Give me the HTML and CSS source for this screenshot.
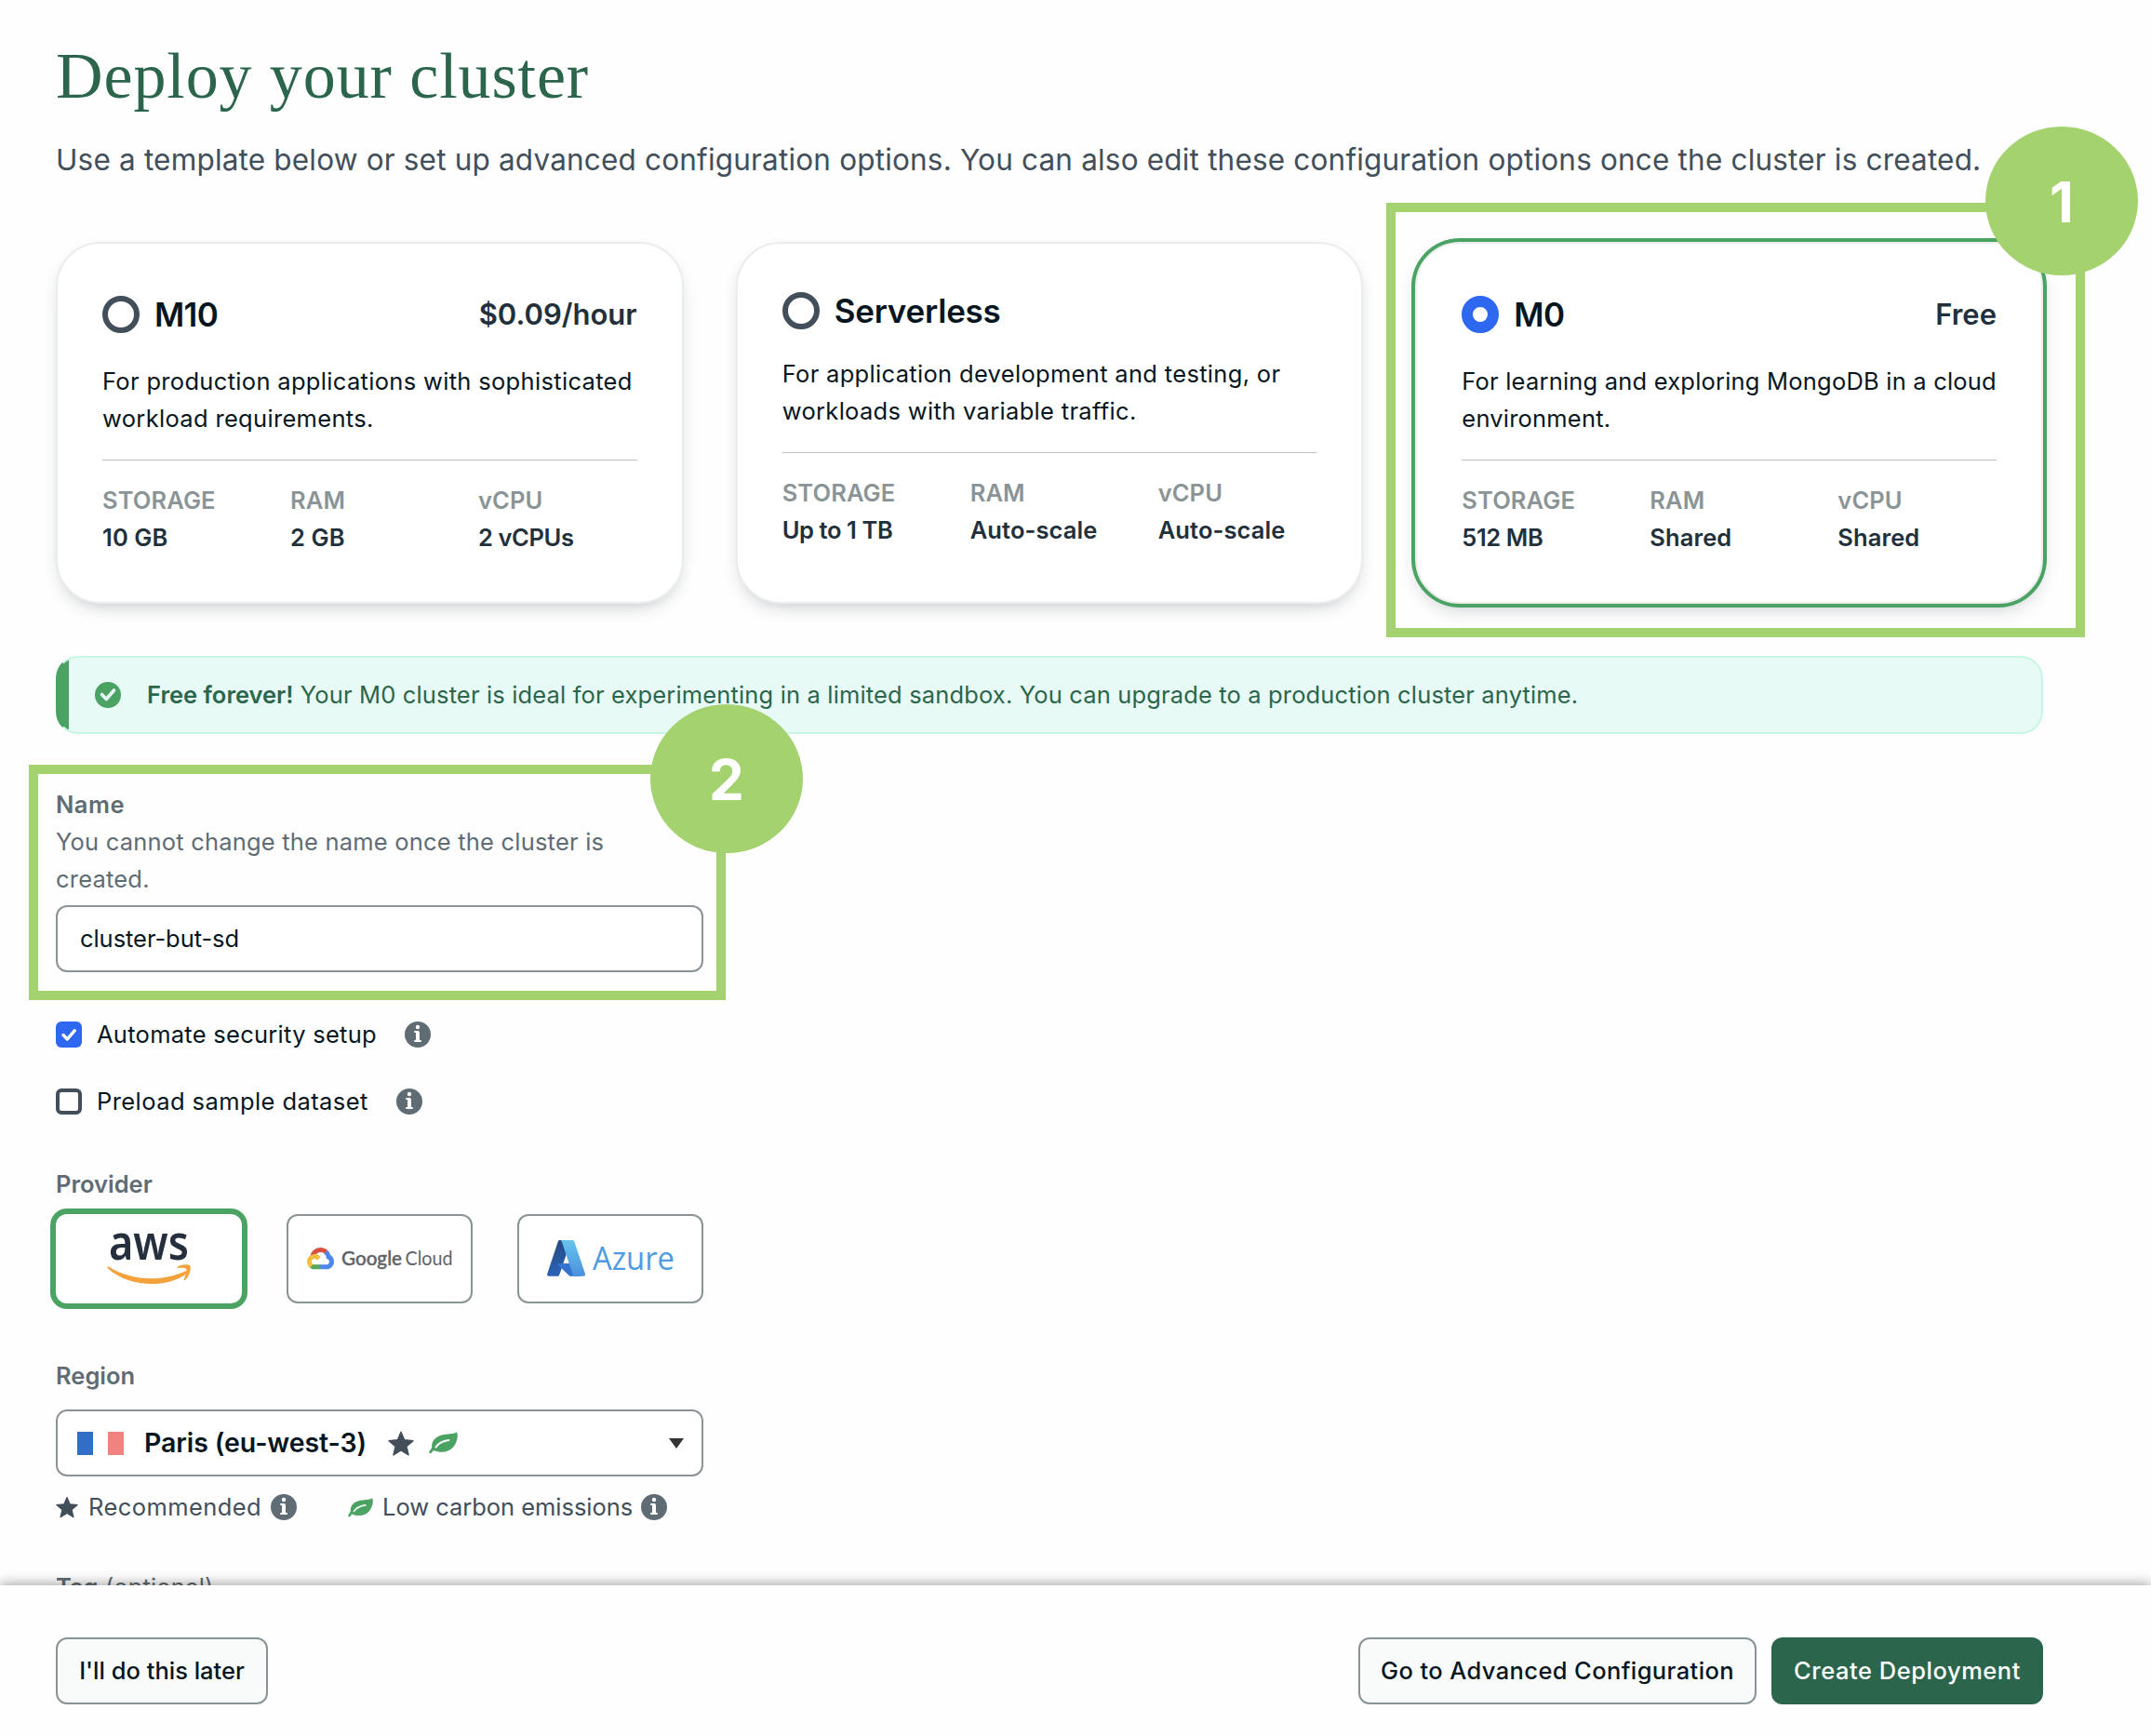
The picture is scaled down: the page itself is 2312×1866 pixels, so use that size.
FILE: index.html
```html
<!DOCTYPE html>
<html lang="en">
<head>
<meta charset="utf-8">
<title>Deploy your cluster</title>
<link rel="stylesheet" href="styles.css">
</head>
<body>
<svg width="0" height="0" class="defs">
  <symbol id="info" viewBox="1 1 14 14"><path fill-rule="evenodd" d="M8 15A7 7 0 1 0 8 1a7 7 0 0 0 0 14zM9.1 4a1.1 1.1 0 1 1-2.2 0 1.1 1.1 0 0 1 2.2 0zM8 6a1 1 0 0 1 1 1v4h.5a.5.5 0 0 1 0 1h-3a.5.5 0 0 1 0-1H7V7h-.5a.5.5 0 0 1 0-1H8z"/></symbol>
  <symbol id="star" viewBox="0 0 28 27"><path stroke-linejoin="round" stroke="currentColor" stroke-width="1.4" d="M14 1.2l3.6 8.6 9.4.8-7.1 6.1 2.2 9.2-8.1-4.9-8.1 4.9 2.2-9.2L1 10.6l9.4-.8z"/></symbol>
  <symbol id="leaf" viewBox="0 0 31 24"><path d="M29.600.5C26 3 20 1.800 14 3.500 7 5.500 2.500 10 3.200 17L.4 21.300C-.2 22.600 1.300 24 2.700 22.800L5 19.900c8 3.300 17 2 21.500-4C30.800 10.500 31.300 5 30.300.9c-.1-.5-.4-.6-.7-.4z"/><path fill="none" stroke="#fff" stroke-width="2" stroke-linecap="round" d="M7.500 16.500c3-5 7-6.500 14-7.500"/></symbol>
</svg>
<main class="page">
  <h1>Deploy your cluster</h1>
  <p class="lead">Use a template below or set up advanced configuration options. You can also edit these configuration options once the cluster is created.</p>

  <section class="plans">
    <article class="plan">
      <header class="plan-head"><i class="radio"></i><h2>M10</h2><b class="price">$0.09/hour</b></header>
      <p class="desc loose">For production applications with sophisticated<br>workload requirements.</p>
      <dl class="specs">
        <div><dt>STORAGE</dt><dd>10 GB</dd></div>
        <div><dt>RAM</dt><dd>2 GB</dd></div>
        <div><dt>vCPU</dt><dd class="tight">2 vCPUs</dd></div>
      </dl>
    </article>
    <article class="plan">
      <header class="plan-head compact"><i class="radio"></i><h2 class="long">Serverless</h2></header>
      <p class="desc loose">For application development and testing, or<br>workloads with variable traffic.</p>
      <dl class="specs">
        <div><dt>STORAGE</dt><dd class="tight">Up to 1 TB</dd></div>
        <div><dt>RAM</dt><dd>Auto-scale</dd></div>
        <div><dt>vCPU</dt><dd>Auto-scale</dd></div>
      </dl>
    </article>
    <article class="plan selected">
      <header class="plan-head"><i class="radio on"></i><h2>M0</h2><b class="price">Free</b></header>
      <p class="desc">For learning and exploring MongoDB in a cloud<br>environment.</p>
      <dl class="specs">
        <div><dt>STORAGE</dt><dd class="tight">512 MB</dd></div>
        <div><dt>RAM</dt><dd>Shared</dd></div>
        <div><dt>vCPU</dt><dd>Shared</dd></div>
      </dl>
    </article>
  </section>

  <section class="banner">
    <svg class="ok" viewBox="0 0 28 28"><circle cx="14" cy="14" r="14" fill="#4aa263"/><path d="M7.500 13.500l4.800 5L20.500 9" fill="none" stroke="#e7faf6" stroke-width="3.600" stroke-linecap="round" stroke-linejoin="round"/></svg>
    <p><b>Free forever!</b> Your M0 cluster is ideal for experimenting in a limited sandbox. You can upgrade to a production cluster anytime.</p>
  </section>

  <form class="settings">
    <label class="label name-label">Name</label>
    <p class="help">You cannot change the name once the cluster is<br>created.</p>
    <div class="field">cluster-but-sd</div>
    <div class="checks">
      <div class="check"><i class="box on"><svg viewBox="0 0 28 28"><path d="M8 14.500l4.300 4.500L20.300 9.700" fill="none" stroke="#fff" stroke-width="3.400" stroke-linecap="round" stroke-linejoin="round"/></svg></i><span class="check-text">Automate security setup</span><svg class="info"><use href="#info"/></svg></div>
      <div class="check"><i class="box"></i><span class="check-text looser">Preload sample dataset</span><svg class="info"><use href="#info"/></svg></div>
    </div>

    <label class="label provider-label">Provider</label>
    <div class="providers">
      <div class="provider active"><svg viewBox="0 0 200 96"><text class="aws-text" x="57" y="48.500" textLength="86" lengthAdjust="spacingAndGlyphs">aws</text><path fill="#f3a23c" d="M56.500 56.500C82 72 113 73 139 61.500c2-.8 3.600 1.200 1.700 2.700C118 80 79 79 56 58.500c-1.200-1.100-.5-2.600.5-2z"/><path fill="#f3a23c" d="M131 56.500c4-2.700 11.500-3 13.200-1.200 1.500 1.900-.2 11.500-5.200 15.700-.9.700-1.700.3-1.300-.7 1.300-3.200 3.400-9.300 2.500-11.300-.9-1.500-5.600-1.300-8.600-1-1 .1-1.500-.8-.6-1.500z"/></svg></div>
      <div class="provider"><svg viewBox="0 0 200 96"><g transform="translate(22 36) scale(.1133)"><path fill="#d9503f" d="M170.252 56.819l22.253-22.253 1.483-9.370C153.437-11.677 88.976-7.496 52.420 33.920 42.267 45.423 34.734 59.764 30.717 74.573l7.970-1.123 44.505-7.340 3.436-3.513c19.797-21.742 53.270-24.667 76.128-6.168l7.496.390z"/><path fill="#4f86ee" d="M224.205 73.918a100.249 100.249 0 0 0-30.217-48.722l-31.232 31.232a55.515 55.515 0 0 1 20.379 44.037v5.544c15.350 0 27.797 12.445 27.797 27.796 0 15.352-12.446 27.485-27.797 27.485h-55.671l-5.466 5.934v33.340l5.466 5.231h55.670c39.930.311 72.553-31.494 72.864-71.424a72.303 72.303 0 0 0-31.793-60.453"/><path fill="#58a55c" d="M71.870 205.796h55.593V161.290H71.870a27.275 27.275 0 0 1-11.400-2.498l-7.887 2.420-22.409 22.253-1.952 7.574c12.567 9.489 27.900 14.825 43.647 14.757"/><path fill="#f2be42" d="M71.870 61.425C31.940 61.663-.237 94.228.001 134.158a72.301 72.301 0 0 0 28.222 56.880l32.248-32.246c-13.990-6.322-20.208-22.786-13.887-36.776 6.320-13.990 22.786-20.208 36.775-13.888a27.796 27.796 0 0 1 13.887 13.888l32.248-32.248A72.224 72.224 0 0 0 71.870 61.425"/></g><text class="gcp-text medium" x="59" y="55" textLength="65" lengthAdjust="spacingAndGlyphs">Google</text><text class="gcp-text" x="127.500" y="55" textLength="51" lengthAdjust="spacingAndGlyphs">Cloud</text></svg></div>
      <div class="provider"><svg viewBox="0 0 200 96">
        <defs><linearGradient id="az1" x1="0" y1="0" x2="0" y2="1"><stop offset="0" stop-color="#264a80"/><stop offset="1" stop-color="#2b63b8"/></linearGradient><linearGradient id="az2" x1="0" y1="0" x2="0" y2="1"><stop offset="0" stop-color="#68c5ee"/><stop offset="1" stop-color="#4a90dc"/></linearGradient></defs>
        <g transform="translate(30.200 25) scale(.466)"><path fill="url(#az1)" d="M33.338 6.544h26.038l-27.030 80.087a4.152 4.152 0 0 1-3.933 2.824H8.149a4.145 4.145 0 0 1-3.928-5.470L29.404 9.368a4.152 4.152 0 0 1 3.934-2.825z"/><path fill="#3374cc" d="M71.175 60.261h-41.290a1.911 1.911 0 0 0-1.305 3.309l26.532 24.764a4.171 4.171 0 0 0 2.846 1.121h23.380z"/><path fill="url(#az2)" d="M66.595 9.364a4.145 4.145 0 0 0-3.928-2.820H33.648a4.146 4.146 0 0 1 3.928 2.820l25.184 74.620a4.146 4.146 0 0 1-3.928 5.472h29.020a4.146 4.146 0 0 0 3.927-5.472z"/></g><text class="azure-text" x="81" y="59.700" textLength="88" lengthAdjust="spacingAndGlyphs">Azure</text></svg></div>
    </div>

    <label class="label region-label">Region</label>
    <div class="field select">
      <i class="flag"></i><b class="region-name">Paris (eu-west-3)</b><svg class="star big"><use href="#star"/></svg><svg class="leaf big"><use href="#leaf"/></svg><i class="caret"></i>
    </div>
    <div class="legend">
      <svg class="star"><use href="#star"/></svg><span class="rec looser">Recommended</span><svg class="info"><use href="#info"/></svg>
      <svg class="leaf"><use href="#leaf"/></svg><span class="low">Low carbon emissions</span><svg class="info"><use href="#info"/></svg>
    </div>
    <p class="tag"><b>Tag</b> (optional)</p>
  </form>
</main>
<footer class="actions">
  <button class="btn later">I'll do this later</button>
  <button class="btn advanced">Go to Advanced Configuration</button>
  <button class="btn primary">Create Deployment</button>
</footer>

<div class="mark-frame frame-plan"></div>
<div class="mark-dot dot-plan">1</div>
<div class="mark-frame frame-name"></div>
<div class="mark-dot dot-name">2</div>
</body>
</html>
```
FILE: styles.css
```css
* { box-sizing: border-box; }
body {
  margin: 0; position: relative; width: 2312px; height: 1866px; overflow: hidden;
  background: #fefefe; color: #061621;
  font: 400 25.500px/40px Inter, "Noto Sans", sans-serif;
}
h1, h2, p, dl, dd { margin: 0; }
b { font-weight: 600; letter-spacing: 0; }
i { display: block; flex: none; }
svg { display: block; flex: none; overflow: visible; }
p, span, dd { white-space: nowrap; }
.defs { position: absolute; }
.page { height: 1704px; overflow: hidden; padding: 42px 116px 0 60px; }

h1 { font: 400 70px/80px "Liberation Serif", serif; letter-spacing: .9px; color: #2b664c; }
.lead { margin-top: 26px; font-size: 31.500px; line-height: 48px; letter-spacing: .18px; color: #424f5a; }

.plans { margin-top: 64px; display: grid; grid-template-columns: repeat(3, minmax(0, 1fr)); gap: 56px; }
.plan {
  height: 389px; padding: 52px 48px 0; border: 2px solid #e9edec; border-radius: 48px;
  background: #fff; box-shadow: 0 8px 20px -8px rgba(0, 30, 43, .3);
}
.plan.selected { box-shadow: 0 0 0 4px #4aa263, 0 8px 20px -4px rgba(0, 30, 43, .25); }
.plan-head { display: flex; align-items: center; height: 48px; }
.plan-head.compact { height: 40px; }
.radio { width: 40px; height: 40px; border: 6px solid #424f5a; border-radius: 50%; }
.radio.on { border: 12px solid #2f68f0; }
h2 { margin: 0 0 0 16px; font-size: 35px; line-height: 40px; font-weight: 600; letter-spacing: -.7px; }
h2.long { letter-spacing: -.23px; }
.price { margin-left: auto; font-size: 31px; color: #21303b; }
.desc { margin-top: 28px; letter-spacing: .2px; }
.desc.loose { letter-spacing: .32px; }
.specs { display: grid; grid-template-columns: repeat(3, 202px); margin-top: 24px; padding-top: 23px; border-top: 1px solid #b9c0c2; }
.specs dt { color: #8a9496; font-weight: 600; letter-spacing: .1px; }
.specs dd { color: #21303b; font-weight: 600; letter-spacing: .1px; }
.specs dd.tight { letter-spacing: -.4px; }

.banner {
  margin-top: 56px; height: 84px; display: flex; align-items: center; padding-left: 40px;
  border: 2px solid #c8f6e4; border-radius: 24px; color: #2b664c; letter-spacing: .15px;
  background: linear-gradient(90deg, #4aa263 14px, #e7faf6 14px) border-box;
  border-left-color: #4aa263;
}
.ok { width: 28px; height: 28px; margin-right: 28px; }

.settings { width: 696px; letter-spacing: .2px; }
.label { display: block; font-weight: 600; letter-spacing: 0; color: #5f6c74; }
.name-label { margin-top: 56px; letter-spacing: .5px; }
.help { color: #5f6c74; }
.field { margin-top: 8px; height: 72px; padding-left: 24px; display: flex; align-items: center; letter-spacing: -.06px; border: 2px solid #8a9496; border-radius: 12px; background: #fff; }
.checks { margin-top: 47px; display: grid; gap: 32px; }
.check { display: flex; align-items: center; height: 40px; }
.box { width: 28px; height: 28px; border: 4px solid #424f5a; border-radius: 6px; }
.box.on { border: 0; background: #2f68f0; }
.check-text { margin: 0 30px 0 16px; letter-spacing: .27px; }
.check-text.looser, .looser { letter-spacing: .42px; }
.info { width: 28px; height: 28px; fill: #5f6c74; }

.provider-label { margin-top: 49px; }
.providers { margin-top: 12px; display: grid; grid-template-columns: repeat(3, 200px); gap: 48px; letter-spacing: 0; }
.provider { height: 96px; border-radius: 12px; background: #fff; box-shadow: inset 0 0 0 2px #8a9496; }
.provider.active { box-shadow: 0 0 0 6px #4aa263; }
.aws-text { font: 600 52px "Noto Sans", sans-serif; fill: #252f3e; }
.gcp-text { font: 400 21px Lato, sans-serif; fill: #5f6368; }
.gcp-text.medium { font-weight: 500; stroke: #5f6368; stroke-width: .4px; }
.azure-text { font: 400 34.500px "Open Sans", sans-serif; fill: #4f9be0; }

.region-label { margin-top: 58px; }
.select { margin-top: 16px; padding: 0 19px 0 21px; font-size: 28.500px; }
.region-name { letter-spacing: -.1px; }
.flag { width: 50px; height: 25px; margin-right: 22px; background: linear-gradient(90deg, #316ec6 0 17px, #fff 17px 33px, #f0837f 33px); }
.star { width: 24px; height: 24px; color: #424f5a; fill: currentColor; }
.leaf { width: 27px; height: 21px; fill: #4aa263; }
.star.big { width: 28px; height: 27px; margin-left: 23px; }
.leaf.big { width: 31px; height: 24px; margin-left: 16px; }
.caret { margin-left: auto; border: 8px solid transparent; border-top: 11px solid #333; border-bottom: 0; }
.legend { margin-top: 13px; height: 40px; display: flex; align-items: center; color: #424f5a; }
.rec { margin: 0 10px 0 11px; }
.legend .leaf { margin-left: 55px; }
.low { margin: 0 9px 0 10px; letter-spacing: -.04px; }
.tag { margin-top: 46px; color: #5f6c74; }

.actions {
  position: relative; height: 162px; padding: 22px 116px 0 60px; display: flex; align-items: center; gap: 16px;
  background: #fefefe; box-shadow: 0 -2px 12px rgba(0, 0, 0, .35);
}
.btn { height: 72px; padding: 0; border: 2px solid #8a9496; border-radius: 12px; background: #f9fbfa; color: #061621; font: 500 25.500px/40px Inter, sans-serif; white-space: nowrap; }
.later { width: 228px; margin-right: auto; }
.advanced { width: 428px; letter-spacing: .39px; }
.primary { width: 292px; border: 0; background: #2b664c; color: #fff; letter-spacing: .54px; }

.mark-frame { position: absolute; border: 10px solid #a3d26e; }
.mark-dot { position: absolute; width: 164px; height: 160px; border-radius: 50%; background: #a3d26e; color: #fff; font-size: 60px; font-weight: 700; line-height: 162px; text-align: center; }
.frame-plan { left: 1490px; top: 218px; width: 751px; height: 467px; }
.dot-plan { left: 2134px; top: 136px; }
.frame-name { left: 31px; top: 822px; width: 749px; height: 253px; }
.dot-name { left: 699px; top: 757px; }
```
